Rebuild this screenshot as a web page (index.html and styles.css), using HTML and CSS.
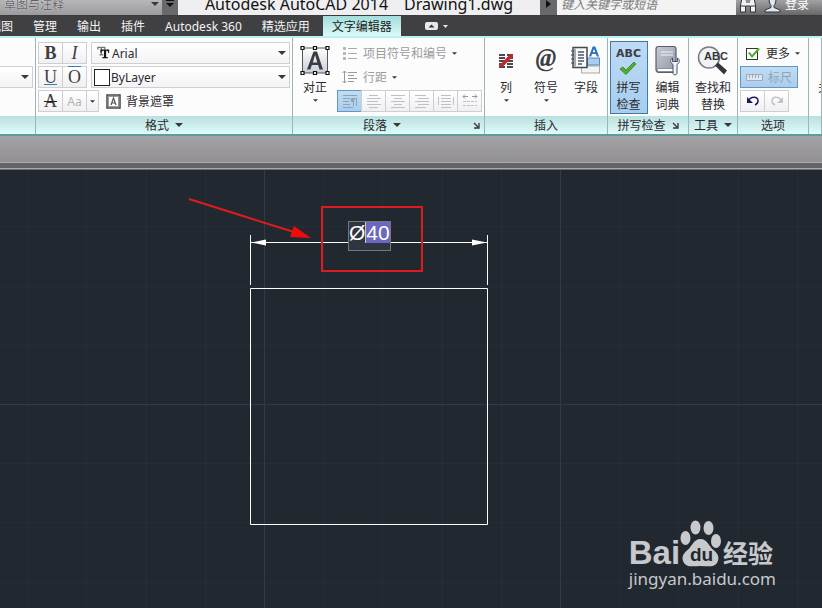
FILE: index.html
```html
<!DOCTYPE html>
<html lang="zh-CN">
<head>
<meta charset="utf-8">
<title>Autodesk AutoCAD 2014 Drawing1.dwg</title>
<link rel="stylesheet" href="styles.css">
</head>
<body>
<svg class="defs" aria-hidden="true">
  <symbol id="caret" viewBox="0 0 8 4"><path d="M0 0h8L4 4z" fill="currentColor"/></symbol>
  <symbol id="launch" viewBox="0 0 7 7"><path d="M1 1l4 4M6 1v5H1" fill="none" stroke="currentColor" stroke-width="1.3"/></symbol>
</svg>

<header class="titlebar">
  <div class="title-row">
    <label class="workspace"><select aria-label="工作空间"><option>草图与注释</option></select><svg class="caret"><use href="#caret"/></svg></label>
    <button class="title-btn" aria-label="自定义"><svg width="8" height="8" viewBox="0 0 8 8"><path d="M0 0h8v1H0zM0 3h8L4 7z" fill="#111"/></svg></button>
    <h1 class="title"><span>Autodesk AutoCAD 2014</span><span>Drawing1.dwg</span></h1>
    <button class="title-btn" aria-label="展开"><svg width="5" height="8" viewBox="0 0 5 8"><path d="M0 0v8l5-4z" fill="#111"/></svg></button>
    <input class="search" aria-label="搜索" placeholder="键入关键字或短语">
    <button class="account" aria-label="查找"><svg width="16" height="18" viewBox="0 0 16 18"><path d="M2.500 1h3v4h5V1h3l2 9v7h-5v-6h-5v6h-5v-7z" fill="#f2f2f4" stroke="#333" stroke-width="1"/><path d="M1 11h4M11 11h4M6 7h4" stroke="#333"/></svg></button>
    <button class="account login"><svg width="17" height="18" viewBox="0 0 17 18"><path d="M5 3.500C5-.500 12-.500 12 3.500c0 4-1 6-2 7v2l6 2.500v2H1v-2L7 12.500v-2C6 9.500 5 7 5 3.500z" fill="#dde7ef" stroke="#333"/></svg>登录</button>
  </div>
</header>

<nav class="tabs">
  <a href="#" class="tab view">视图</a>
  <a href="#" class="tab">管理</a>
  <a href="#" class="tab">输出</a>
  <a href="#" class="tab">插件</a>
  <a href="#" class="tab">Autodesk 360</a>
  <a href="#" class="tab">精选应用</a>
  <a href="#" class="tab active">文字编辑器</a>
  <button class="collapse" aria-label="最小化功能区"><svg width="24" height="8" viewBox="0 0 24 8"><rect width="13" height="8" rx="2" fill="#e8e8ea"/><path d="M3.500 5.500h6l-3-3z" fill="#333"/><path d="M18 3h5l-2.500 3z" fill="#e8e8ea"/></svg></button>
</nav>

<main class="ribbon">
  <section class="panel">
    <div class="body style-body"><label class="combo cut"><select aria-label="文字高度"><option></option></select><svg class="caret"><use href="#caret"/></svg></label></div>
    <footer></footer>
  </section>

  <section class="panel">
    <div class="body rows">
      <div class="row">
        <div class="group"><button class="tool serif bold">B</button><button class="tool serif italic">I</button></div>
        <label class="combo"><svg class="lead" width="13" height="14" viewBox="0 0 15 16"><path d="M1 4V1.500h8V4M5 1.500V10M3 10h4" fill="none" stroke="#777" stroke-width="1.5"/><path d="M4 4h10v4h-1c0-2-1-2.500-2.500-2.500v7l2 .5v1H6v-1l2-.5v-7C6 5.500 5 6 5 8H4z" fill="#111"/></svg><select class="font" aria-label="字体"><option>Arial</option></select><svg class="caret"><use href="#caret"/></svg></label>
      </div>
      <div class="row">
        <div class="group"><button class="tool serif under">U</button><button class="tool serif over">O</button></div>
        <label class="combo color"><span class="swatch"></span><select class="layer" aria-label="颜色"><option>ByLayer</option></select><svg class="caret"><use href="#caret"/></svg></label>
      </div>
      <div class="row">
        <div class="group"><button class="tool serif strike">A</button><button class="tool faded">Aa</button><button class="tool mini" aria-label="大小写"><svg class="tiny"><use href="#caret"/></svg></button></div>
        <button class="plain mask"><svg width="15" height="15" viewBox="0 0 15 15"><rect x="1" y="1" width="13" height="13" fill="#fff" stroke="#444" stroke-width="1.500"/><rect x="2.500" y="2.500" width="10" height="10" fill="none" stroke="#333" stroke-dasharray="1 1"/><path d="M5 11l2.500-7L10 11M6 9h3" fill="none" stroke="#555" stroke-width="1.200"/></svg>背景遮罩</button>
      </div>
    </div>
    <footer>格式<svg class="caret"><use href="#caret"/></svg></footer>
  </section>

  <section class="panel">
    <div class="body para">
      <button class="big"><svg class="pic" width="30" height="30" viewBox="0 0 30 30"><defs><linearGradient id="g1" x2="0" y2="1"><stop stop-color="#fff"/><stop offset="1" stop-color="#c9cdd6"/></linearGradient></defs><rect x="2.500" y="2.500" width="25" height="25" fill="url(#g1)" stroke="#555"/><path d="M7 24L13.500 6h3.500l6 18h-3.500l-1.400-4.500h-6.200L10.300 24zM12.800 17h4.500L15.100 9.600z" fill="#3a3d42"/><g fill="#fff" stroke="#111" stroke-width="1.200"><path d="M1 1h3v3H1zM13.500 1h3v3h-3zM26 1h3v3h-3zM1 26h3v3H1zM13.500 26h3v3h-3zM26 26h3v3h-3z"/></g></svg><span>对正</span><svg class="tiny"><use href="#caret"/></svg></button>
      <div class="rows">
        <button class="plain off"><svg width="16" height="14" viewBox="0 0 16 14"><path d="M1 1h3v3H1zM1 6h3v3H1zM1 11h3v3H1z" fill="#b8b8bb"/><path d="M6 2.500h9M6 7.500h9M6 12.500h9" stroke="#aaa"/></svg>项目符号和编号<svg class="tiny"><use href="#caret"/></svg></button>
        <button class="plain off"><svg width="16" height="14" viewBox="0 0 16 14"><path d="M2.500 1v12M.500 3l2-2 2 2M.500 11l2 2 2-2M6 2.500h9M6 5.500h6M6 8.500h9M6 11.500h6" fill="none" stroke="#999"/></svg>行距<svg class="tiny"><use href="#caret"/></svg></button>
        <div class="group aligns">
          <button class="tool on" aria-label="默认"><svg width="16" height="14" viewBox="0 0 16 14"><path d="M1 1.500h14M1 4.500h7M1 7.500h6M1 10.500h7M1 13.500h10M11.500 4v8M14.500 4v8M10 4.500h5" stroke="#8aa4bd" fill="none"/><circle cx="10.500" cy="6" r="2" fill="#8aa4bd"/></svg></button>
          <button class="tool" aria-label="左对齐"><svg width="16" height="14" viewBox="0 0 16 14"><path d="M3 1.500h9M1 4.500h14M1 7.500h11M1 10.500h14M3 13.500h9" stroke="#c0c0c4"/></svg></button>
          <button class="tool" aria-label="居中"><svg width="16" height="14" viewBox="0 0 16 14"><path d="M1 1.500h14M4 4.500h8M1 7.500h14M4 10.500h8M1 13.500h14" stroke="#c0c0c4"/></svg></button>
          <button class="tool" aria-label="右对齐"><svg width="16" height="14" viewBox="0 0 16 14"><path d="M1 1.500h11M4 4.500h11M1 7.500h14M4 10.500h11M1 13.500h11" stroke="#c0c0c4"/></svg></button>
          <button class="tool" aria-label="对正"><svg width="16" height="14" viewBox="0 0 16 14"><path d="M3 1.500h10M3 4.500h10M3 7.500h10M3 10.500h10M3 13.500h10M.500 3v8M15.500 3v8" stroke="#c0c0c4"/></svg></button>
          <button class="tool" aria-label="分散对齐"><svg width="16" height="14" viewBox="0 0 16 14"><path d="M1 2.500h5M10 2.500h5M3 .500l-2 2 2 2M13 .500l2 2-2 2" stroke="#999" fill="none"/><path d="M1 7.500h14M1 11.500h14" stroke="#c0c0c4" stroke-dasharray="3 1"/></svg></button>
        </div>
      </div>
    </div>
    <footer>段落<svg class="caret"><use href="#caret"/></svg><svg class="launch"><use href="#launch"/></svg></footer>
  </section>

  <section class="panel">
    <div class="body bigs">
      <button class="big"><svg class="pic" width="16" height="16" viewBox="0 0 16 16"><path d="M1 2.500h6M1 5.500h6M1 8.500h6M1 11.500h6M1 14.500h6M9 2.500h6M9 5.500h6M9 8.500h6M9 11.500h6M9 14.500h6" stroke="#111" stroke-width="1.500"/><path d="M1 13L12 2h3v2L5 14H1z" fill="#c4282d"/></svg><span>列</span><svg class="tiny"><use href="#caret"/></svg></button>
      <button class="big"><span class="pic at">@</span><span>符号</span><svg class="tiny"><use href="#caret"/></svg></button>
      <button class="big"><svg class="pic" width="30" height="30" viewBox="0 0 30 30"><rect x="10.500" y="20.500" width="18" height="7" fill="#f4f4f4" stroke="#aaa"/><rect x="16.500" y="12.500" width="12" height="7" fill="#a9cdec" stroke="#568cbc"/><rect x="2" y="2" width="14" height="20" fill="#f6f8fa" stroke="#45484d" stroke-width="1.500"/><path d="M3 3h2v18H3z" fill="#a5a9b0"/><path d="M7 6.500h6M7 9.500h6M7 12.500h6M7 15.500h6M7 18.500h4" stroke="#4d5967" stroke-width="1.300"/><path d="M0 5.500h3M0 9.500h3M0 13.500h3M0 17.500h3" stroke="#45484d"/><path d="M18 11L21.700 1h2.600L28 11h-2.200l-.8-2.500h-4L20.200 11zM21.700 6.700h2.600L23 3.200z" fill="#2a6fc0"/></svg><span>字段</span></button>
    </div>
    <footer>插入</footer>
  </section>

  <section class="panel">
    <div class="body bigs">
      <button class="big picked"><span class="pic abc"><b>ABC</b><svg width="18" height="14" viewBox="0 0 18 14"><path d="M1 8l3-2 3 3 8-8 2 2L7 13.500z" fill="#4fae32" stroke="#2f8420" stroke-width=".8"/></svg></span><span>拼写<br>检查</span></button>
      <button class="big"><svg class="pic" width="25" height="30" viewBox="0 0 25 30"><defs><linearGradient id="g2" x2="1" y2="1"><stop stop-color="#c6cad3"/><stop offset="1" stop-color="#9197a5"/></linearGradient></defs><path d="M3.500 1h15c1.500 0 2.500 1 2.500 2.500V25c0 1.500-1 2-2 2H4c-2 0-3-1.500-3-3V3.500C1 2 2 1 3.500 1z" fill="url(#g2)" stroke="#5a5e68" stroke-width="1.200"/><path d="M3.500 23H20v3H4c-2 0-2-3-.500-3z" fill="#fff" stroke="#5a5e68" stroke-width=".6"/><path d="M6 6.500h12M6 9.500h12" stroke="#f5f5f5"/><path d="M17.500 12.500c-3 2-2 5 .500 6.500v8.500c0 2.500 4 2.500 4 0V19c2.500-1.500 3.500-4.500.500-6.500V16h-5z" fill="#eef2f7" stroke="#42526b"/></svg><span>编辑<br>词典</span></button>
    </div>
    <footer>拼写检查<svg class="launch"><use href="#launch"/></svg></footer>
  </section>

  <section class="panel">
    <div class="body bigs">
      <button class="big"><svg class="pic" width="32" height="30" viewBox="0 0 32 30"><circle cx="12" cy="12" r="10.500" fill="#eff3f6" stroke="#777b82" stroke-width="1.500"/><path d="M18 20l3-3 9 8-3 4z" fill="#33363b"/><text class="lens" x="7" y="14">ABC</text></svg><span>查找和<br>替换</span></button>
    </div>
    <footer>工具<svg class="caret"><use href="#caret"/></svg></footer>
  </section>

  <section class="panel">
    <div class="body rows options">
      <button class="plain"><svg width="16" height="14" viewBox="0 0 16 14"><rect x="1.500" y="2.500" width="11" height="11" fill="#fff" stroke="#333"/><path d="M3 7l2-1 2 3 6-7 2 1-8 9z" fill="#4cae30"/></svg>更多<svg class="tiny"><use href="#caret"/></svg></button>
      <button class="plain ruler"><svg width="17" height="9" viewBox="0 0 17 9"><path d="M.500 1.500h16v6H.500zM3.500 2v3M6.500 2v3M9.500 2v3M12.500 2v3" fill="#dce6f2" stroke="#9aabbd"/></svg>标尺</button>
      <div class="group"><button class="tool" aria-label="放弃"><svg width="14" height="12" viewBox="0 0 14 12"><path d="M2 6C5 1 12 1 12 6c0 2-1 3-3 4" fill="none" stroke="#1b1b5a" stroke-width="1.500"/><path d="M1 2v6h6z" fill="#1b1b5a"/></svg></button><button class="tool" aria-label="重做"><svg width="14" height="12" viewBox="0 0 14 12"><path d="M12 6C9 1 2 1 2 6c0 2 1 3 3 4" fill="none" stroke="#c2c2c5" stroke-width="1.500"/><path d="M13 2v6H7z" fill="#c2c2c5"/></svg></button></div>
    </div>
    <footer>选项</footer>
  </section>

  <section class="panel">
    <div class="body last"><button class="big close"><span class="pic"></span><span>关闭</span></button></div>
    <footer></footer>
  </section>
</main>

<div class="dock"></div>
<div class="frame"></div>

<div class="stage">
  <svg class="drawing" aria-label="图形">
    <defs><pattern id="grid" x="264" y="234" width="296" height="296" patternUnits="userSpaceOnUse">
      <path d="M59.500 0v296M118.500 0v296M178.500 0v296M237.500 0v296M0 59.500h296M0 118.500h296M0 178.500h296M0 237.500h296" stroke="#262d37"/>
      <path d="M.500 0v296M0 .500h296" stroke="#333a46"/></pattern></defs>
    <rect width="100%" height="100%" fill="url(#grid)"/>
    <g fill="none" stroke="#fff"><path d="M250.500 118.500h237v236h-237zM250.500 65v50M487.500 65v50M251 72.500h237"/></g>
    <path d="M251 72.500l15-3v6zM487 72.500l-15-3v6z" fill="#fff"/>
    <rect x="322" y="37" width="100" height="64" fill="none" stroke="#dc1c1f" stroke-width="2"/>
    <path d="M189 29l108 34" stroke="#dc1c1f" stroke-width="2"/><path d="M294 56l17 12-21-1z" fill="#f00b0b"/>
  </svg>
  <div class="dimension" contenteditable="true" role="textbox" aria-label="标注文字" spellcheck="false">Ø<mark>40</mark></div>
  <div class="brand">
    <div class="brand-row"><span class="bai">Bai</span><svg class="paw" width="41" height="47" viewBox="0 0 41 47"><g fill="#c8c9cc"><ellipse cx="5.500" cy="18" rx="5" ry="7"/><ellipse cx="15.500" cy="7.500" rx="5" ry="7"/><ellipse cx="28.500" cy="8" rx="5" ry="7"/><ellipse cx="36" cy="21" rx="5" ry="7"/><path d="M20.500 19c7 0 8 7 13 11s6 8 4 12c-3 6-10 4-17 4s-14 2-17-4c-2-4-1-8 4-12s6-11 13-11z"/></g><text class="du" x="10" y="41">du</text></svg><span class="jy">经验</span></div>
    <div class="url">jingyan.baidu.com</div>
  </div>
</div>
</body>
</html>
```

FILE: styles.css
```css
* { box-sizing: border-box; }
body {
  margin: 0;
  min-height: 100vh;
  display: flex;
  flex-direction: column;
  overflow: hidden;
  background: #212830;
  color: #2b2b2e;
  font: 12px/17px "Noto Sans", "Noto Sans CJK SC", sans-serif;
}
button, select, input {
  margin: 0;
  padding: 0;
  border: 0;
  border-radius: 0;
  background: none;
  color: inherit;
  font: inherit;
  appearance: none;
}
svg { display: block; flex: none; }
.defs { position: absolute; width: 0; height: 0; }
.caret { width: 8px; height: 4px; color: #38383b; }
.tiny { width: 5px; height: 3px; color: #38383b; }

.titlebar {
  height: 16px;
  display: flex;
  align-items: flex-end;
  overflow: hidden;
  background: linear-gradient(#a2a2a5, #68686b);
  border-bottom: 1px solid #3c3c3f;
}
.title-row {
  flex: 1;
  height: 22px;
  display: grid;
  grid-template-columns: 162fr 16px 362fr 17px 179fr 24px 62px;
}
.title-row > * { display: flex; align-items: center; }
.workspace { background: linear-gradient(#c4c4c6, #9b9b9e); padding-right: 3px; }
.workspace select { flex: 1; padding-left: 4px; color: #626266; text-shadow: 0 0 1px #fff; }
.title-btn { justify-content: center; background: #69696d; }
.title { margin: 0; gap: 16px; justify-content: center; background: #efeff1; color: #111; font-size: 16px; font-weight: 400; white-space: nowrap; }
.search { min-width: 0; padding-left: 4px; background: #f3f3f4; font-style: italic; }
.search::placeholder { color: #77777a; opacity: 1; }
.account { justify-content: center; }
.login { gap: 4px; color: #fff; justify-content: flex-start; padding-left: 4px; }

.tabs {
  height: 20px;
  display: flex;
  align-items: center;
  gap: 20px;
  background: #404043;
  overflow: hidden;
}
.tab { color: #f3f3f4; text-decoration: none; white-space: nowrap; line-height: 20px; padding-top: 2px; }
.view { margin-left: -11px; }
.active { margin-left: -7px; padding: 2px 9px 0; background: linear-gradient(#9fdcda, #dffafa); color: #222; }
.collapse { margin-left: 4px; }

.ribbon {
  display: grid;
  grid-template-columns: 36fr 257fr 192fr 123fr 81fr 49fr 71fr 13fr;
  border-top: 2px solid #b8f2f2;
  border-bottom: 2px solid #5f9b9b;
  background: #fcfcfd;
}
.panel { min-width: 0; overflow: hidden; display: flex; flex-direction: column; border-right: 1px solid #9bb4b5; }
.body { height: 78px; padding: 4px 2px 0; white-space: nowrap; }
.panel footer {
  height: 18px;
  display: flex;
  align-items: center;
  justify-content: center;
  gap: 6px;
  padding: 0 4px;
  background: linear-gradient(#b9e0df, #dffbfa);
  white-space: nowrap;
}
.rows { display: flex; flex-direction: column; gap: 2px; }
.row { display: flex; gap: 4px; }
.group { display: flex; }
.tool {
  width: 25px;
  height: 22px;
  display: flex;
  align-items: center;
  justify-content: center;
  border: 1px solid #cfcfd3;
  background: linear-gradient(#fff, #f0f0f3);
}
.tool + .tool { margin-left: -1px; }
.serif { font: bold 18px/18px "Liberation Serif", serif; color: #3d3d40; }
.italic { font-style: italic; font-weight: 400; }
.under, .over, .strike { font-weight: 400; text-decoration: underline #2b80ad; }
.over { text-decoration-line: overline; }
.strike { text-decoration: line-through #222; }
.faded { color: #b3b3b7; }
.mini { width: 13px; }
.combo {
  flex: 1;
  height: 22px;
  display: flex;
  align-items: center;
  gap: 2px;
  padding: 0 3px;
  border: 1px solid #cfcfd3;
  background: linear-gradient(#fff, #f3f3f5);
}
.combo select { flex: 1; min-width: 0; height: 20px; }
.lead { margin-left: 2px; }
.color { gap: 1px; padding-left: 2px; }
.swatch { width: 16px; height: 17px; border: 1px solid #222; background: #fff; }
.style-body { display: flex; align-items: center; padding: 0 2px 0 0; }
.cut { border-left: 0; }
.plain { height: 22px; display: flex; align-items: center; gap: 5px; padding: 0 5px; }
.off { color: #9b9b9f; }
.mask { padding: 0 3px; }
.para { display: flex; gap: 3px; padding-left: 3px; }
.para .rows { flex: 1; }
.aligns .tool { flex: 1; }
.aligns .on, .ruler { border: 1px solid #5c98cb; background: linear-gradient(#c2dcf2, #aacdec); }
.launch { width: 7px; height: 7px; color: #333; }
.para + footer .launch { margin-left: 66px; }
.para + footer { justify-content: flex-end; }

.big {
  height: 73px;
  min-width: 38px;
  display: flex;
  flex-direction: column;
  align-items: center;
  border: 1px solid transparent;
}
.big .tiny { margin-top: 3px; }
.pic { height: 37px; flex: none; }
.bigs { display: flex; justify-content: space-around; padding: 3px 1px 0; }
.last { padding-top: 3px; }
.para .big { margin-top: -1px; }
.at { font: italic bold 25px/32px "Liberation Serif", serif; color: #3d3f44; }
.picked { border-color: #3b7bb0; background: linear-gradient(#bedaf3, #a6cdf0); }
.abc { display: flex; flex-direction: column; align-items: center; padding-top: 4px; }
.abc b { font: bold 11px/15px "DejaVu Sans", sans-serif; color: #3c4046; }
.lens { font: bold 11px "Liberation Sans", sans-serif; fill: #34383e; }
.ruler { align-self: flex-start; color: #8fa3b8; }

.dock { height: 26px; background: linear-gradient(#a3a2a4, #929093); }
.frame { height: 7px; border: solid #aaa9ac; border-width: 1px 0; background: #656367; }
.stage { border-top: 1px solid #6c6c70; }

.stage { position: relative; flex: 1; min-height: 0; }
.drawing { width: 100%; height: 100%; position: absolute; }
.dimension {
  position: absolute;
  left: 348px;
  top: 51px;
  height: 30px;
  border: 1px solid #777579;
  background: #30363f;
  color: #fff;
  font: 21px/21px "Liberation Sans", sans-serif;
  outline: 0;
}
.dimension mark { display: inline-block; border-left: 1px solid #c8c8cc; background: #6a68c0; color: #fff; }
.brand { position: absolute; right: 46px; bottom: 18px; color: #c8c9cc; }
.brand-row { display: flex; align-items: flex-end; height: 47px; }
.bai { font: bold 33px/28px "Liberation Sans", sans-serif; }
.paw { overflow: visible; }
.du { font: bold 19px "Liberation Sans", sans-serif; fill: #212830; }
.jy { margin-left: 2px; font: bold 25px/29px "Noto Sans CJK SC", sans-serif; }
.url { font: 17px/23px "Noto Sans", sans-serif; }
```
